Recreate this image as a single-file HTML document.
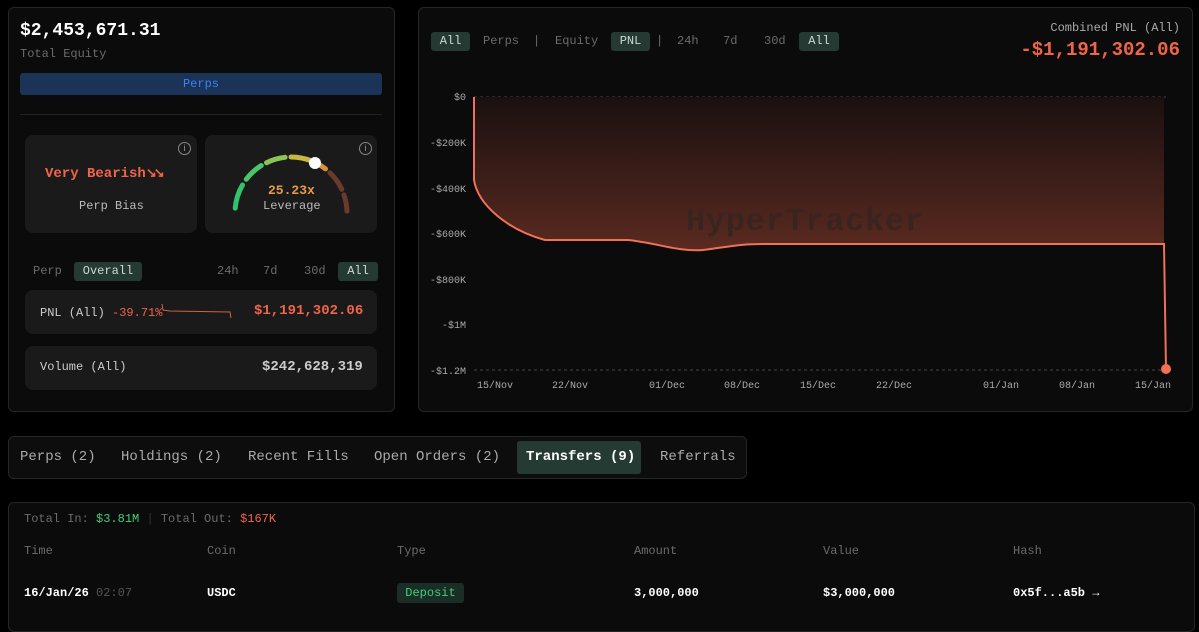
<!DOCTYPE html>
<html><head><meta charset="utf-8"><style>
*{margin:0;padding:0;box-sizing:border-box}
body{width:1199px;height:619px;background:#000;font-family:"Liberation Mono",monospace;color:#ddd;position:relative;overflow:hidden}
.abs{position:absolute}
.panel{position:absolute;background:#0b0b0b;border:1px solid #262626;border-radius:6px}
.card{position:absolute;background:#1a1a1a;border-radius:8px}
.pill{position:absolute;background:#243a33;color:#cfd8d4;border-radius:3px;font-size:12px;text-align:center}
.g{color:#6b6b6b}
.info{position:absolute;width:13px;height:13px;border:1px solid #888;border-radius:50%;font-size:9px;color:#999;text-align:center;line-height:11px;font-family:"Liberation Sans",sans-serif}
</style></head><body>

<div class="panel" style="left:8px;top:7px;width:387px;height:405px"></div>
<div class="abs" style="left:20px;top:21px;font-size:18px;font-weight:bold;color:#fff">$2,453,671.31</div>
<div class="abs g" style="left:20px;top:47px;font-size:12px">Total Equity</div>
<div class="abs" style="left:20px;top:73px;width:362px;height:22px;background:#1c3358;border-radius:3px;color:#3b82f6;font-size:12px;text-align:center;line-height:22px">Perps</div>
<div class="abs" style="left:20px;top:114px;width:362px;height:1px;background:#222"></div>

<div class="card" style="left:25px;top:135px;width:172px;height:98px"></div>
<div class="info" style="left:178px;top:142px">i</div>
<div class="abs" style="left:45px;top:166px;font-size:14px;font-weight:bold;color:#f0644a;white-space:nowrap">Very Bearish<span style="font-size:13px;letter-spacing:-3px">↘↘</span></div>
<div class="abs" style="left:79px;top:199px;font-size:12px;color:#bbb">Perp Bias</div>

<div class="card" style="left:205px;top:135px;width:172px;height:98px"></div>
<div class="info" style="left:359px;top:142px">i</div>
<svg class="abs" style="left:0;top:0" width="400" height="240">
<g fill="none" stroke-width="5" stroke-linecap="round">
<path d="M235.2 208.1 A56 56 0 0 1 242.5 185" stroke="#34c26f"/>
<path d="M246.3 179.3 A56 56 0 0 1 261.3 165.5" stroke="#4cc46a"/>
<path d="M266.5 162.7 A56 56 0 0 1 285.1 157.3" stroke="#8cc454"/>
<path d="M291 157 A56 56 0 0 1 312 161.1" stroke="#c9b844"/>
<path d="M317.3 163.6 A56 56 0 0 1 325.5 168.9" stroke="#d8903c"/>
<path d="M329.9 172.7 A56 56 0 0 1 341.8 189.3" stroke="#6a3a2c"/>
<path d="M343.9 194.8 A56 56 0 0 1 347 211" stroke="#6a3a2c"/>
</g>
<circle cx="315" cy="163" r="6" fill="#fff"/>
</svg>
<div class="abs" style="left:268px;top:183px;font-size:13px;font-weight:bold;color:#e89a4a">25.23x</div>
<div class="abs" style="left:263px;top:199px;font-size:12px;color:#bbb">Leverage</div>

<div class="abs g" style="left:33px;top:264px;font-size:12px">Perp</div>
<div class="pill" style="left:74px;top:262px;width:68px;height:19px;line-height:19px">Overall</div>
<div class="abs g" style="left:217px;top:264px;font-size:12px">24h</div>
<div class="abs g" style="left:263px;top:264px;font-size:12px">7d</div>
<div class="abs g" style="left:304px;top:264px;font-size:12px">30d</div>
<div class="pill" style="left:338px;top:262px;width:40px;height:19px;line-height:19px">All</div>

<div class="card" style="left:25px;top:290px;width:352px;height:44px"></div>
<div class="abs" style="left:40px;top:306px;font-size:12px;color:#ccc">PNL (All) <span style="color:#f0644a">-39.71%</span></div>
<svg class="abs" style="left:160px;top:300px" width="75" height="20"><path d="M2 4 L3 10 L10 11 L70 12 L71 18" fill="none" stroke="#d06048" stroke-width="1"/></svg>
<div class="abs" style="left:254px;top:303px;font-size:14px;font-weight:bold;color:#f0644a">$1,191,302.06</div>

<div class="card" style="left:25px;top:346px;width:352px;height:44px"></div>
<div class="abs" style="left:40px;top:360px;font-size:12px;color:#ccc">Volume (All)</div>
<div class="abs" style="left:262px;top:359px;font-size:14px;font-weight:bold;color:#ccc">$242,628,319</div>

<div class="panel" style="left:418px;top:7px;width:775px;height:405px"></div>
<div class="pill" style="left:431px;top:32px;width:39px;height:19px;line-height:19px">All</div>
<div class="abs g" style="left:483px;top:34px;font-size:12px">Perps</div>
<div class="abs g" style="left:533px;top:34px;font-size:12px">|</div>
<div class="abs g" style="left:555px;top:34px;font-size:12px">Equity</div>
<div class="pill" style="left:611px;top:32px;width:39px;height:19px;line-height:19px">PNL</div>
<div class="abs g" style="left:656px;top:34px;font-size:12px">|</div>
<div class="abs g" style="left:677px;top:34px;font-size:12px">24h</div>
<div class="abs g" style="left:723px;top:34px;font-size:12px">7d</div>
<div class="abs g" style="left:764px;top:34px;font-size:12px">30d</div>
<div class="pill" style="left:799px;top:32px;width:40px;height:19px;line-height:19px">All</div>
<div class="abs" style="right:19px;top:21px;font-size:12px;color:#aaa">Combined PNL (All)</div>
<div class="abs" style="right:19px;top:39px;font-size:19px;font-weight:bold;color:#f0644a">-$1,191,302.06</div>

<svg class="abs" style="left:418px;top:0" width="781" height="410">
<defs><linearGradient id="gr" x1="0" y1="0" x2="0" y2="1"><stop offset="0" stop-color="#1a1010"/><stop offset="1" stop-color="#5a2a20"/></linearGradient></defs>
<g font-family="Liberation Mono,monospace" font-size="10" fill="#aaa" text-anchor="end">
<text x="48" y="100">$0</text><text x="48" y="146">-$200K</text><text x="48" y="192">-$400K</text><text x="48" y="237">-$600K</text><text x="48" y="283">-$800K</text><text x="48" y="328">-$1M</text><text x="48" y="374">-$1.2M</text>
</g>
<g font-family="Liberation Mono,monospace" font-size="10" fill="#aaa" text-anchor="middle">
<text x="77" y="388">15/Nov</text><text x="152" y="388">22/Nov</text><text x="249" y="388">01/Dec</text><text x="324" y="388">08/Dec</text><text x="400" y="388">15/Dec</text><text x="476" y="388">22/Dec</text><text x="583" y="388">01/Jan</text><text x="659" y="388">08/Jan</text><text x="735" y="388">15/Jan</text>
</g>
<line x1="56" y1="97" x2="748" y2="97" stroke="#444" stroke-dasharray="3 3"/>
<line x1="56" y1="370" x2="748" y2="370" stroke="#444" stroke-dasharray="3 3"/>
<path d="M56 97 L56 180 C60 205 90 230 127 240 L210 240 C240 243 260 252 285 250 C310 247 320 244 345 244 L746 244 L746 97 Z" fill="url(#gr)"/>
<text x="387" y="230" font-family="Liberation Mono,monospace" font-weight="bold" font-size="32" fill="#3a2420" text-anchor="middle" textLength="238">HyperTracker</text>
<path d="M56 97 L56 180 C60 205 90 230 127 240 L210 240 C240 243 260 252 285 250 C310 247 320 244 345 244 L746 244 L748 369" fill="none" stroke="#f07058" stroke-width="2"/>
<circle cx="748" cy="369" r="5" fill="#f07058"/>
</svg>

<div class="panel" style="left:8px;top:436px;width:739px;height:43px;background:#0d0d0d"></div>
<div class="abs" style="left:20px;top:449px;font-size:14px;color:#aaa">Perps (2)</div>
<div class="abs" style="left:121px;top:449px;font-size:14px;color:#aaa">Holdings (2)</div>
<div class="abs" style="left:248px;top:449px;font-size:14px;color:#aaa">Recent Fills</div>
<div class="abs" style="left:374px;top:449px;font-size:14px;color:#aaa">Open Orders (2)</div>
<div class="abs" style="left:517px;top:441px;width:124px;height:33px;background:#243a33;border-radius:3px"></div>
<div class="abs" style="left:526px;top:449px;font-size:14px;color:#fff;font-weight:bold">Transfers (9)</div>
<div class="abs" style="left:660px;top:449px;font-size:14px;color:#aaa">Referrals</div>

<div class="panel" style="left:8px;top:502px;width:1187px;height:130px"></div>
<div class="abs g" style="left:24px;top:512px;font-size:12px">Total In: <span style="color:#3ecf7e">$3.81M</span> <span style="color:#333">|</span> Total Out: <span style="color:#f0644a">$167K</span></div>
<div class="abs g" style="left:24px;top:544px;font-size:12px">Time</div>
<div class="abs g" style="left:207px;top:544px;font-size:12px">Coin</div>
<div class="abs g" style="left:397px;top:544px;font-size:12px">Type</div>
<div class="abs g" style="left:634px;top:544px;font-size:12px">Amount</div>
<div class="abs g" style="left:823px;top:544px;font-size:12px">Value</div>
<div class="abs g" style="left:1013px;top:544px;font-size:12px">Hash</div>
<div class="abs" style="left:24px;top:586px;font-size:12px;color:#fff;font-weight:bold">16/Jan/26 <span style="color:#555;font-weight:normal">02:07</span></div>
<div class="abs" style="left:207px;top:586px;font-size:12px;color:#fff;font-weight:bold">USDC</div>
<div class="abs" style="left:397px;top:583px;width:67px;height:20px;background:#1a2e26;border-radius:3px;color:#3ecf7e;font-size:12px;text-align:center;line-height:20px">Deposit</div>
<div class="abs" style="left:634px;top:586px;font-size:12px;color:#fff;font-weight:bold">3,000,000</div>
<div class="abs" style="left:823px;top:586px;font-size:12px;color:#fff;font-weight:bold">$3,000,000</div>
<div class="abs" style="left:1013px;top:586px;font-size:12px;color:#fff;font-weight:bold">0x5f...a5b →</div>
</body></html>
